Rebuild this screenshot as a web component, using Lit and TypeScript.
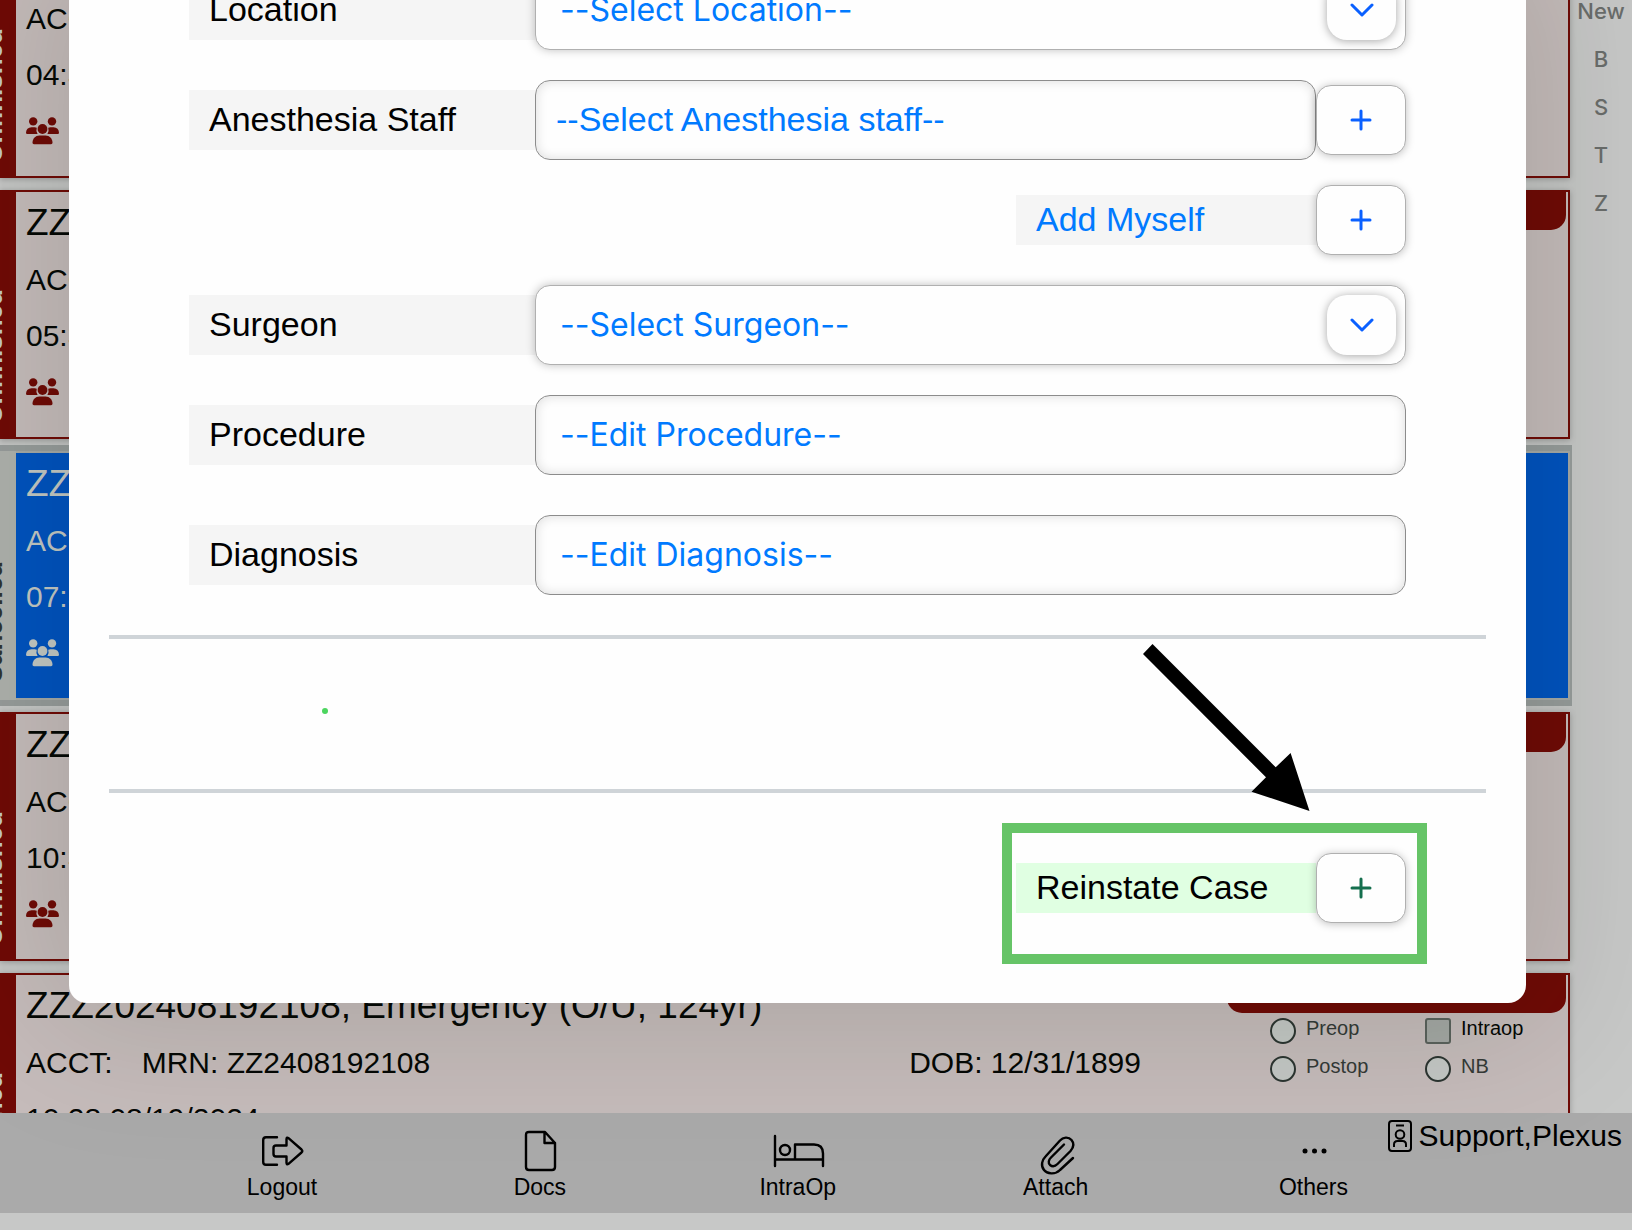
import { LitElement, html, css, svg, nothing } from "lit";
import { customElement, property } from "lit/decorators.js";
import { classMap } from "lit/directives/class-map.js";

interface CaseEntry {
  id: string;
  name: string;
  mrn: string;
  dob: string;
  time: string;
  status: string;
  selected?: boolean;
}

const CASES: CaseEntry[] = [
  { id: "c1", name: "ZZZ202408191430, Emergency (O/U, 124yr)", mrn: "ZZ2408191430", dob: "12/31/1899", time: "04:30 08/19/2024", status: "Unfinished" },
  { id: "c2", name: "ZZZ202408191530, Emergency (O/U, 124yr)", mrn: "ZZ2408191530", dob: "12/31/1899", time: "05:30 08/19/2024", status: "Unfinished" },
  { id: "c3", name: "ZZZ202408191730, Emergency (O/U, 124yr)", mrn: "ZZ2408191730", dob: "12/31/1899", time: "07:30 08/19/2024", status: "Cancelled", selected: true },
  { id: "c4", name: "ZZZ202408192030, Emergency (O/U, 124yr)", mrn: "ZZ2408192030", dob: "12/31/1899", time: "10:30 08/19/2024", status: "Unfinished" },
  { id: "c5", name: "ZZZ202408192108, Emergency (O/U, 124yr)", mrn: "ZZ2408192108", dob: "12/31/1899", time: "10:28 08/19/2024", status: "Unfinished" },
];

const PHASES = [
  { name: "Preop", active: false },
  { name: "Intraop", active: true },
  { name: "Postop", active: false },
  { name: "NB", active: false },
];

@customElement("case-card")
export class CaseCard extends LitElement {
  @property({ attribute: false }) entry!: CaseEntry;

  static styles = css`
    :host { display: block; }
    .card {
      display: flex;
      height: 249px;
      box-sizing: border-box;
      border: 2px solid #700a06;
      border-left: 0;
      background: #c6bcbb;
      color: #050805;
      box-shadow: 0 1px 6px rgba(0, 0, 0, 0.25);
    }
    .status {
      flex: none;
      display: flex;
      align-items: flex-end;
      width: 16px;
      margin-block: -2px;
      padding-bottom: 16px;
      box-sizing: border-box;
      overflow: hidden;
      background: #700a06;
      color: #c4c8c4;
    }
    .status-text {
      margin-left: -23px;
      writing-mode: vertical-rl;
      transform: rotate(180deg);
      font-size: 26px;
      font-weight: 700;
      line-height: 32px;
      white-space: nowrap;
    }
    .info { flex: 1; padding: 4px 86px 0 10px; min-width: 0; }
    .name { margin: 0 0 2px; font-size: 37px; line-height: 54px; font-weight: 400; white-space: nowrap; }
    .line { display: flex; font-size: 30px; line-height: 56px; white-space: nowrap; }
    .acct { margin-right: 29px; }
    .dob { margin-left: auto; }
    .team { display: flex; align-items: center; height: 56px; color: #700a06; }
    .side { flex: none; width: 339px; margin-right: 2px; }
    .tag {
      height: 38px;
      border-radius: 0 0 15px 15px;
      background: #700a06;
      color: #c4c8c4;
      font-size: 26px;
      line-height: 38px;
      text-align: center;
    }
    .phases {
      display: grid;
      grid-template-columns: 155px 1fr;
      row-gap: 12px;
      margin: 5px 0 0 43px;
    }
    .phase { display: flex; gap: 10px; height: 26px; color: #343a37; font-size: 20px; line-height: 20px; }
    .phase.active { color: #050805; }
    .mark {
      appearance: none;
      width: 26px;
      height: 26px;
      margin: 0;
      border: 2px solid #2c3531;
      border-radius: 50%;
      background: #c4c8c5;
    }
    .active .mark { border-color: #5b625d; border-radius: 3px; background: #a4a8a4; }
    .selected {
      border-color: #a6a9a6;
      background: #0053c0;
      color: #c4c8c4;
      box-shadow: 2px -6px 0 #979c9b, 2px 6px 0 #979c9b, -2px -6px 0 #979c9b, -2px 6px 0 #979c9b;
    }
    .selected .status { background: #aeb1ac; color: #2f3431; }
    .selected .team { color: #c4c8c4; }
  `;

  render() {
    const e = this.entry;
    return html`
      <article class=${classMap({ card: true, selected: !!e.selected })}>
        <div class="status"><span class="status-text">${e.status}</span></div>
        <div class="info">
          <h2 class="name">${e.name}</h2>
          <div class="line">
            <span class="acct">ACCT:</span><span>MRN: ${e.mrn}</span>
            <span class="dob">DOB: ${e.dob}</span>
          </div>
          <div class="line">${e.time}</div>
          <div class="team">
            <svg width="33" height="28" viewBox="0 0 33 28" fill="currentColor" aria-hidden="true">
              <circle cx="7.2" cy="4.4" r="4.2" /><circle cx="26" cy="4.4" r="4.2" />
              <circle cx="16.5" cy="12" r="4.9" />
              <path d="M1.2 17Q0 17 0 15.8Q.2 10.4 5.6 10.2H8.6Q9.8 10.2 10.8 10.7Q9.6 14 11.6 17Z" />
              <path d="M31.8 17Q33 17 33 15.8Q32.8 10.4 27.4 10.2H24.4Q23.2 10.2 22.2 10.7Q23.4 14 21.4 17Z" />
              <path d="M6.5 25.6C6.7 21.4 9.4 18.5 13.5 18.5h6c4.1 0 6.8 2.900 7 7.100 0 1-.6 1.700-1.500 1.700h-17c-.9 0-1.500-.7-1.500-1.700z" />
            </svg>
          </div>
        </div>
        ${e.selected ? nothing : html`
          <div class="side">
            <div class="tag">Unfinished Case</div>
            <div class="phases">
              ${PHASES.map((p) => html`
                <label class=${classMap({ phase: true, active: p.active })}>
                  <input class="mark" type=${p.active ? "checkbox" : "radio"} ?checked=${p.active} />${p.name}
                </label>`)}
            </div>
          </div>`}
      </article>`;
  }
}

const plus = html`
  <svg width="22" height="22" viewBox="0 0 22 22" fill="none" stroke="currentColor" stroke-width="3" stroke-linecap="round" aria-hidden="true">
    <path d="M11 2v18M2 11h18" />
  </svg>`;

@customElement("case-form")
export class CaseForm extends LitElement {
  static styles = css`
    :host { display: block; }
    .sheet {
      position: relative;
      padding-bottom: 80px;
      border-radius: 0 0 18px 18px;
      background: #fefefe;
      box-shadow: 0 0 140px 30px rgba(0, 22, 0, 0.13);
      color: #000;
      font-size: 34px;
    }
    .fields { display: flex; flex-direction: column; gap: 30px; margin-top: -30px; padding: 0 120px; }
    .row { display: flex; align-items: center; }
    .row.compact { justify-content: flex-end; }
    .fields .compact { margin-top: -5px; }
    .row.spaced { margin-top: 10px; }
    .label {
      flex: none;
      width: 346px;
      padding: 0 0 2px 20px;
      box-sizing: border-box;
      background: #f5f5f5;
      line-height: 58px;
    }
    .action-label {
      width: 300px;
      padding: 0 0 2px 20px;
      box-sizing: border-box;
      background: #f5f5f5;
      color: #007aff;
      line-height: 48px;
    }
    .control {
      display: block;
      width: 100%;
      height: 80px;
      margin: 0;
      padding: 0 24px 2px;
      box-sizing: border-box;
      border: 1px solid #8c8c8c;
      border-radius: 15px;
      background: #fefefe;
      box-shadow: inset 0 0 12px rgba(0, 0, 0, 0.14);
      color: #007aff;
      font: 400 32px Inter, "Liberation Sans", sans-serif;
      font-feature-settings: "calt" 0;
      outline: 0;
    }
    .control::placeholder { color: #007aff; opacity: 1; }
    .plain { flex: 1; width: auto; min-width: 0; padding: 0 20px 2px; font: 400 34px "Liberation Sans", Arial, sans-serif; }
    .wrap { flex: 1; display: grid; align-items: center; }
    .wrap > * { grid-area: 1 / 1; }
    .picker { appearance: none; border-color: #b0b0b0; box-shadow: 0 0 10px rgba(0, 0, 0, 0.25); }
    .chevron {
      display: flex;
      align-items: center;
      justify-content: center;
      justify-self: end;
      width: 69px;
      height: 60px;
      margin-right: 10px;
      border-radius: 20px;
      background: #fefefe;
      box-shadow: 0 1px 10px rgba(0, 0, 0, 0.35);
      color: #0a60ff;
      pointer-events: none;
    }
    .add {
      flex: none;
      display: flex;
      align-items: center;
      justify-content: center;
      width: 90px;
      height: 70px;
      padding: 0;
      border: 1px solid #b0b0b0;
      border-radius: 15px;
      background: #fefefe;
      box-shadow: 0 1px 9px rgba(0, 0, 0, 0.25);
      color: #0a60ff;
    }
    .rule { height: 4px; margin: 40px 40px 0; border: 0; background: #cfd4d8; }
    .blank { height: 150px; }
    .rule.second { margin-top: 0; }
    .reinstate { padding: 60px 120px 0; }
    .positive { background: #e0ffe2; color: #000; }
    .reinstate .add { color: #156f4e; }
    .dot {
      position: absolute;
      bottom: 289px;
      left: 253px;
      width: 6px;
      height: 6px;
      border-radius: 50%;
      background: #4cd55f;
    }
    .highlight {
      position: absolute;
      right: 99px;
      bottom: 39px;
      width: 425px;
      height: 141px;
      box-sizing: border-box;
      border: 10px solid #66c467;
      pointer-events: none;
    }
    .arrow { position: absolute; right: 216px; bottom: 192px; pointer-events: none; }
  `;

  private picker(id: string, label: string, text: string) {
    return html`
      <div class="row">
        <label class="label" for=${id}>${label}</label>
        <div class="wrap">
          <select class="control picker" id=${id}><option>${text}</option></select>
          <span class="chevron">
            <svg width="24" height="14" viewBox="0 0 24 14" fill="none" stroke="currentColor" stroke-width="3" stroke-linecap="round" stroke-linejoin="round" aria-hidden="true">
              <path d="M2 2l10 10L22 2" />
            </svg>
          </span>
        </div>
      </div>`;
  }

  render() {
    return html`
      <section class="sheet">
        <div class="fields">
          ${this.picker("location", "Location", "--Select Location--")}
          <div class="row">
            <label class="label" for="staff">Anesthesia Staff</label>
            <input class="control plain" id="staff" placeholder="--Select Anesthesia staff--" />
            <button class="add" aria-label="Add staff">${plus}</button>
          </div>
          <div class="row compact">
            <label class="action-label" for="myself">Add Myself</label>
            <button class="add" id="myself">${plus}</button>
          </div>
          ${this.picker("surgeon", "Surgeon", "--Select Surgeon--")}
          <div class="row">
            <label class="label" for="procedure">Procedure</label>
            <div class="wrap"><input class="control" id="procedure" placeholder="--Edit Procedure--" /></div>
          </div>
          <div class="row spaced">
            <label class="label" for="diagnosis">Diagnosis</label>
            <div class="wrap"><input class="control" id="diagnosis" placeholder="--Edit Diagnosis--" /></div>
          </div>
        </div>
        <hr class="rule" />
        <div class="blank"></div>
        <hr class="rule second" />
        <div class="reinstate">
          <div class="row compact">
            <label class="action-label positive" for="reinstate">Reinstate Case</label>
            <button class="add" id="reinstate">${plus}</button>
          </div>
        </div>
        <span class="dot"></span>
        <div class="highlight"></div>
        <svg class="arrow" width="167" height="167" viewBox="0 0 167 167" aria-hidden="true">
          <path d="M0 10L9.500 0L132.700 123.300L147.600 109L166.500 167L108.500 147.700L123 133.300Z" />
        </svg>
      </section>`;
  }
}

const ICONS = {
  logout: svg`<path d="M21 6.200H10Q7.200 6.200 7.200 9V31Q7.200 33.800 10 33.800H21M30.500 14.500V8Q30.700 5.800 32.500 7.200L45.500 18.500Q47 20 45.500 21.500L32.500 32.800Q30.700 34.200 30.500 32V25.500H20Q17.500 25.500 17.500 23V17Q17.500 14.500 20 14.500Z"/>`,
  docs: svg`<path d="M15 1H31L41 12V36q0 3-3 3H15q-3 0-3-3V4q0-3 3-3zM30.500 1V12H41"/>`,
  intraop: svg`<path d="M3 5V35M3 28.500H51M23 28.500V13.500H42Q51 13.500 51 22.500V35"/><circle cx="13" cy="19" r="5"/>`,
  attach: svg`<path d="M43 27L30 39C25 44 17 43 14 39C10.500 34.500 12 29 15.500 25.500L30 9.500C33 6 38.500 5.500 41.500 9C44.500 12.500 43.500 16.500 40.500 20L27.500 33C25 35.500 22.500 36 20 34C18 32 18.500 29 21 26.500L34 13.500"/>`,
  others: svg`<g fill="currentColor" stroke="none"><circle cx="17" cy="20" r="2.500"/><circle cx="26.500" cy="20" r="2.500"/><circle cx="36" cy="20" r="2.500"/></g>`,
};

const ACTIONS = [
  { label: "Logout", icon: ICONS.logout },
  { label: "Docs", icon: ICONS.docs },
  { label: "IntraOp", icon: ICONS.intraop },
  { label: "Attach", icon: ICONS.attach },
  { label: "Others", icon: ICONS.others },
];

@customElement("app-root")
export class AppRoot extends LitElement {
  static styles = css`
    :host {
      display: block;
      font-family: "Liberation Sans", Arial, Helvetica, sans-serif;
    }
    .page {
      position: relative;
      display: flex;
      flex-direction: column;
      height: 100vh;
      overflow: hidden;
      background: #c7c8c7;
    }
    .main { flex: 1; display: flex; min-height: 0; overflow: hidden; }
    .cases {
      flex: 1;
      display: flex;
      flex-direction: column;
      gap: 12px;
      min-width: 0;
      margin: -71px 0 0;
    }
    .index {
      display: flex;
      flex-direction: column;
      align-items: center;
      width: 62px;
      margin-top: -13px;
    }
    .letter {
      color: #6a6d6b;
      font: 500 22px/48px Inter, "Liberation Sans", sans-serif;
      text-decoration: none;
    }
    .bar {
      flex: none;
      display: flex;
      align-items: flex-start;
      height: 100px;
      margin-bottom: 17px;
      padding: 0 10px 0 232px;
      box-sizing: border-box;
      background: #aaaaaa;
    }
    .actions { flex: 1; display: flex; justify-content: space-between; }
    .action {
      display: flex;
      flex-direction: column;
      align-items: center;
      gap: 2px;
      width: 100px;
      padding: 18px 0 0;
      border: 0;
      background: none;
      color: #000;
      font: 400 23px/28px "Liberation Sans", Arial, sans-serif;
    }
    .icon { overflow: visible; }
    .user {
      display: flex;
      align-items: center;
      gap: 7px;
      margin: 6px 0 0 24px;
      font-size: 30px;
      line-height: 34px;
    }
    .modal { position: absolute; top: 0; left: 69px; right: 106px; }
  `;

  render() {
    return html`
      <div class="page">
        <div class="main">
          <main class="cases">
            ${CASES.map((c) => html`<case-card .entry=${c}></case-card>`)}
          </main>
          <nav class="index" aria-label="Index">
            ${["New", "B", "S", "T", "Z"].map((l) => html`<a class="letter" href="#${l}">${l}</a>`)}
          </nav>
        </div>
        <footer class="bar">
          <nav class="actions">
            ${ACTIONS.map((a) => html`
              <button class="action">
                <svg class="icon" width="52" height="40" viewBox="0 0 52 40" fill="none" stroke="currentColor" stroke-width="2.4" stroke-linecap="round" stroke-linejoin="round" aria-hidden="true">${a.icon}</svg>
                ${a.label}
              </button>`)}
          </nav>
          <div class="user">
            <svg width="24" height="32" viewBox="0 0 24 32" fill="none" stroke="currentColor" stroke-width="2" aria-hidden="true">
              <rect x="1" y="1" width="22" height="30" rx="3" />
              <path d="M8 5.500H16M6 27V24.500Q6 21 9.500 21H14.500Q18 21 18 24.500V27" />
              <circle cx="12" cy="14.500" r="4.300" />
            </svg>
            <span>Support,Plexus</span>
          </div>
        </footer>
        <case-form class="modal"></case-form>
      </div>`;
  }
}
